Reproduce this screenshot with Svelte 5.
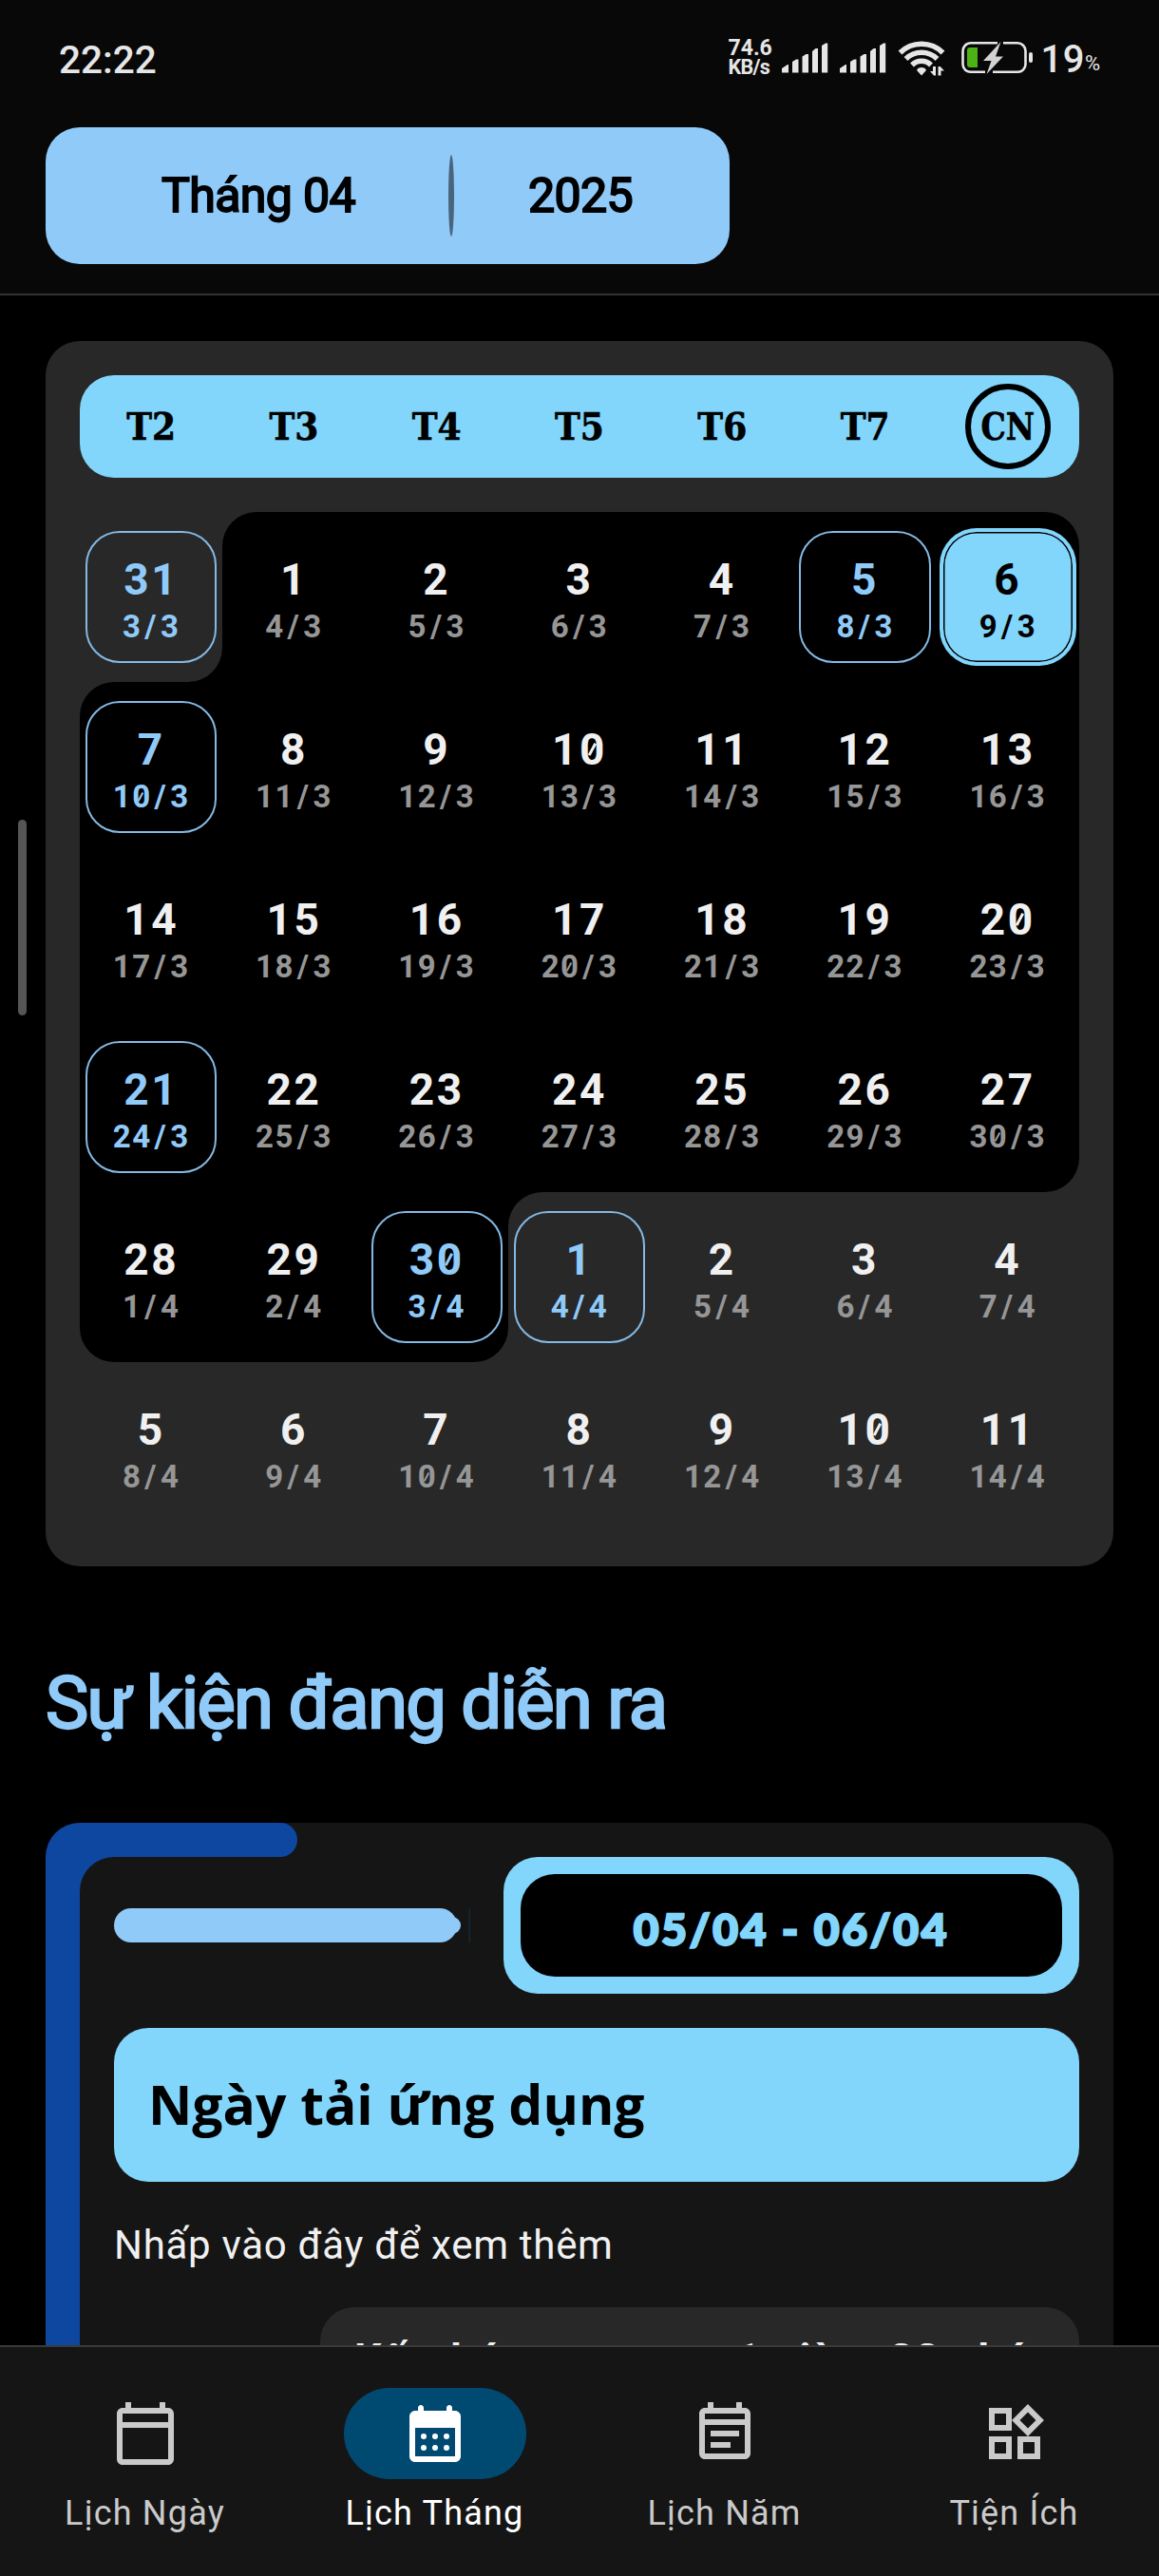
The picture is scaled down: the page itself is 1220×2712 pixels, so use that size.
<script lang="ts">
  type Day = { day: string; lunar: string; event?: boolean; today?: boolean; outside?: boolean; shape?: string };

  const weekdays = ['T2', 'T3', 'T4', 'T5', 'T6', 'T7', 'CN'];

  const eventCells = [0, 5, 7, 21, 30, 31];
  const shapes: Record<number, string> = {
    0: 'notch-br',
    1: 'tl',
    6: 'tr',
    7: 'tl',
    27: 'br',
    28: 'bl',
    30: 'br',
    31: 'notch-tl'
  };

  // Six weeks starting on Monday 31 March 2025 (lunar 3/3).
  const days: Day[] = Array.from({ length: 42 }, (_, i) => {
    const day = i === 0 ? 31 : i <= 30 ? i : i - 30;
    const lunar = i < 28 ? `${i + 3}/3` : `${i - 27}/4`;
    return {
      day: String(day),
      lunar,
      event: eventCells.includes(i),
      today: i === 6,
      outside: i === 0 || i > 30,
      shape: shapes[i] ?? ''
    };
  });

  const tabs = [
    {
      label: 'Lịch Ngày',
      path: 'M20 3h-1V1h-2v2H7V1H5v2H4c-1.1 0-2 .9-2 2v16c0 1.1.9 2 2 2h16c1.1 0 2-.9 2-2V5c0-1.1-.9-2-2-2zm0 18H4V10h16v11zm0-13H4V5h16v3z'
    },
    {
      label: 'Lịch Tháng',
      active: true,
      path: 'M19 4h-1V3c0-.55-.45-1-1-1s-1 .45-1 1v1H8V3c0-.55-.45-1-1-1s-1 .45-1 1v1H5c-1.11 0-1.99.9-1.99 2L3 20c0 1.1.89 2 2 2h14c1.1 0 2-.9 2-2V6c0-1.1-.9-2-2-2zm0 16H5V10h14v10zM8 12a1 1 0 1 0 0 2 1 1 0 0 0 0-2zm4 0a1 1 0 1 0 0 2 1 1 0 0 0 0-2zm4 0a1 1 0 1 0 0 2 1 1 0 0 0 0-2zm-8 4a1 1 0 1 0 0 2 1 1 0 0 0 0-2zm4 0a1 1 0 1 0 0 2 1 1 0 0 0 0-2zm4 0a1 1 0 1 0 0 2 1 1 0 0 0 0-2z'
    },
    {
      label: 'Lịch Năm',
      path: 'M19 3h-1V1h-2v2H8V1H6v2H5c-1.11 0-2 .9-2 2v14c0 1.1.89 2 2 2h14c1.1 0 2-.9 2-2V5c0-1.1-.9-2-2-2zm0 16H5V9h14v10zM5 7V5h14v2H5zm2 4h10v2H7v-2zm0 4h7v2H7v-2z'
    },
    {
      label: 'Tiện Ích',
      path: 'M16.66 4.52l2.83 2.83-2.83 2.83-2.83-2.83 2.83-2.83M9 5v4H5V5h4m10 10v4h-4v-4h4M9 15v4H5v-4h4m7.66-13.31L11 7.34 16.66 13l5.66-5.66-5.66-5.65zM11 3H3v8h8V3zm10 10h-8v8h8v-8zm-10 0H3v8h8v-8z'
    }
  ];
</script>

{#snippet mono(text: string)}{#each text as c}{#if c === '0'}<span class="zero">0</span>{:else if c === '/'}<span class="slash">/</span>{:else}{c}{/if}{/each}{/snippet}

<div class="screen">
  <header>
    <div class="status">
      <span class="clock">22:22</span>
      <span class="speed"><span class="rate">74.6</span><span class="unit">KB/s</span></span>
      <svg class="indicators" viewBox="820 38 270 44" width="270" height="44">
        <g fill="#e6e6e6">
          <path d="M823 75.5V71l6-4h1v8.500zM834 75.500V64l4-2.500h2.500v14zM844.500 75.500V58.500l4-2.500h2.500v19.500zM855 75.500V53l3.500-3h2.500v25.500zM865 75.500V47l4-2.500h2.200v31z" />
          <path d="M884 75.500V71l6-4h1v8.500zM895 75.500V64l4-2.500h2.500v14zM905.500 75.500V58.500l4-2.500h2.500v19.500zM916 75.500V53l3.500-3h2.500v25.500zM926 75.500V47l4-2.500h2.200v31z" />
          <path d="M970 78.500l-5-5.500q1-3 5-3t5 3z" />
          <path d="M985 69v9.500h-2l-4-4.500h3v-5zM987.500 78.500V69h2.200l4.300 4.500h-3.500v5z" />
        </g>
        <g fill="none" stroke="#e6e6e6" stroke-width="5.500">
          <path d="M947.500 54.500A32 32 0 0 1 992.500 54.500" />
          <path d="M953.500 61A23.500 23.500 0 0 1 986.500 61" />
          <path d="M960 67.500A14 14 0 0 1 980 67.500" />
        </g>
        <rect x="1018" y="49" width="11" height="21" rx="3" fill="#4db314" />
        <rect x="1026" y="49" width="3" height="21" fill="#4db314" />
        <path d="M1050 44.300h-28a8.500 8.500 0 0 0-8.500 8.500v14a8 8 0 0 0 8.500 8h15M1056 44.300h15a8.500 8.500 0 0 1 8.500 8.500v14a8 8 0 0 1-8.500 8h-26" fill="none" stroke="#e6e6e6" stroke-width="2.600" />
        <path d="M1053.500 43l-18.500 20h8.500l-5 14 17.500-18.500h-8z" fill="#d2d2d2" />
        <rect x="1083" y="54" width="4" height="11" rx="2" fill="#e6e6e6" />
      </svg>
      <span class="battery">19</span><span class="percent">%</span>
    </div>
    <div class="picker">
      <span class="month">Tháng 04</span>
      <i class="divider"></i>
      <span class="year">2025</span>
    </div>
  </header>

  <main>
    <i class="handle"></i>
    <section class="calendar">
      <div class="weekdays">
        {#each weekdays as name}
          <div class="weekday" class:ring={name === 'CN'}><span>{name}</span></div>
        {/each}
      </div>
      <div class="grid">
        {#each days as d}
          <div class="cell {d.shape}">
            <div class="face" class:outside={d.outside}>
              <div class="box" class:event={d.event} class:today={d.today}>
                <div class="day">{@render mono(d.day)}</div>
                <div class="lunar">{@render mono(d.lunar)}</div>
              </div>
            </div>
          </div>
        {/each}
      </div>
    </section>

    <h2>Sự kiện đang diễn ra</h2>

    <article class="event-card">
      <div class="accent"></div>
      <div class="frame">
        <div class="body">
          <div class="head">
            <svg class="progress" viewBox="0 0 376 36" width="376" height="36">
              <rect width="361" height="36" rx="18" fill="#90caf9" />
              <circle cx="356" cy="18" r="9" fill="#90caf9" />
              <rect x="373.500" width="1.500" height="36" fill="#102a36" />
            </svg>
            <div class="range"><span>05/04 - 06/04</span></div>
          </div>
          <h3>Ngày tải ứng dụng</h3>
          <p>Nhấp vào đây để xem thêm</p>
          <div class="chip"><span>Kết thúc</span> <span>trong</span> <span>1 giờ</span> <span>22 phút</span></div>
        </div>
      </div>
    </article>
  </main>

  <nav>
    {#each tabs as tab}
      <div class="tab" class:active={tab.active}>
        <div class="pill">
          <svg viewBox="0 0 24 24" width="72" height="72"><path d={tab.path} fill-rule={tab.active ? 'nonzero' : 'evenodd'} /></svg>
        </div>
        <span>{tab.label}</span>
      </div>
    {/each}
  </nav>
</div>

<style>
  :global(body) {
    background: #000;
  }
  .screen {
    display: flex;
    flex-direction: column;
    width: 1220px;
    height: 2712px;
    overflow: hidden;
    background: #000;
    font-family: Roboto, 'Liberation Sans', sans-serif;
    color: #f0f0f0;
  }

  header {
    box-sizing: border-box;
    height: 311px;
    flex: none;
    background: #080808;
    border-bottom: 2px solid #333;
  }
  .status {
    box-sizing: border-box;
    display: flex;
    align-items: center;
    height: 134px;
    padding: 0 62px 12px 62px;
    color: #e6e6e6;
    white-space: nowrap;
  }
  .clock {
    flex: 1;
    font-size: 40.500px;
    font-weight: 500;
    line-height: 40px;
    padding-top: 3px;
  }
  .speed {
    display: flex;
    flex-direction: column;
    width: 53px;
    line-height: 20px;
    font-weight: 700;
  }
  .rate {
    font-size: 23px;
  }
  .unit {
    font-size: 21.500px;
    letter-spacing: -0.700px;
  }
  .indicators {
    flex: none;
    margin-right: 6px;
  }
  .battery {
    font-size: 40px;
    line-height: 40px;
    font-weight: 500;
    padding-top: 3px;
    letter-spacing: 0.500px;
  }
  .percent {
    font-size: 22px;
    line-height: 24px;
    width: 16px;
    padding-top: 11px;
    letter-spacing: -0.500px;
  }
  .picker {
    box-sizing: border-box;
    display: flex;
    align-items: center;
    width: 720px;
    height: 144px;
    margin-left: 48px;
    padding: 0 24px;
    border-radius: 36px;
    background: #90caf9;
    color: #000;
    font-size: 50px;
    font-weight: 400;
    line-height: 60px;
    letter-spacing: -0.600px;
    text-align: center;
    -webkit-text-stroke: 1.900px #000;
  }
  .month {
    width: 400px;
  }
  .divider {
    width: 6px;
    height: 86px;
    border-radius: 50%;
    background: #48657d;
  }
  .year {
    flex: 1;
  }

  main {
    position: relative;
    flex: 1;
    min-height: 0;
    overflow: hidden;
    padding: 48px 48px 0;
  }
  .handle {
    position: absolute;
    left: 19px;
    top: 552px;
    width: 9px;
    height: 206px;
    border-radius: 5px;
    background: #555;
  }

  .calendar {
    padding: 36px;
    border-radius: 36px;
    background: #282828;
  }
  .weekdays {
    display: grid;
    grid-template-columns: repeat(7, 1fr);
    height: 108px;
    margin-bottom: 36px;
    border-radius: 36px;
    background: #82d5fb;
    color: #000;
    font: 700 40px/1 'DejaVu Serif Condensed', 'DejaVu Serif', serif;
    -webkit-text-stroke: 0.600px #000;
  }
  .weekday {
    display: grid;
    place-items: center;
  }
  .ring {
    box-sizing: border-box;
    width: 90px;
    height: 90px;
    border: 6px solid #000;
    border-radius: 50%;
    place-self: center;
  }
  .ring span {
    transform: scaleX(0.920);
  }

  .grid {
    display: grid;
    grid-template-columns: repeat(7, 1fr);
    grid-auto-rows: 179px;
  }
  .face {
    box-sizing: border-box;
    height: 179px;
    padding: 20px 6px;
    background: #000;
  }
  .face.outside {
    background: #282828;
  }
  .tl .face,
  .notch-tl .face {
    border-top-left-radius: 36px;
  }
  .tr .face {
    border-top-right-radius: 36px;
  }
  .bl .face {
    border-bottom-left-radius: 36px;
  }
  .br .face,
  .notch-br .face {
    border-bottom-right-radius: 36px;
  }
  .notch-tl,
  .notch-br {
    background: #000;
  }
  .box {
    box-sizing: border-box;
    height: 139px;
    border: 2px solid transparent;
    border-radius: 36px;
    padding-top: 21px;
    text-align: center;
    font-weight: 700;
    white-space: nowrap;
  }
  .day {
    font-size: 46px;
    line-height: 56px;
    letter-spacing: 2.600px;
  }
  .lunar {
    font-size: 33px;
    line-height: 43px;
    letter-spacing: 1.400px;
    color: #969696;
    font-weight: 700;
  }
  .event {
    border-color: #84b9e4;
  }
  .event,
  .event .lunar {
    color: #90caf9;
  }
  .today {
    border-color: #82d5fb;
    border-width: 1px;
    padding-top: 22px;
    background: #82d5fb;
    box-shadow:
      0 0 0 3px #82d5fb,
      inset 0 0 0 1.500px #000;
  }
  .today,
  .today .lunar {
    color: #000;
  }
  .slash {
    padding: 0 3px;
  }
  .zero {
    position: relative;
  }
  /* Diagonal stroke inside the zero's counter */
  .zero::after {
    content: '';
    position: absolute;
    left: calc(0.287em - 0.035em);
    top: 0.440em;
    width: 0.070em;
    height: 0.300em;
    background: currentColor;
    transform: rotate(28deg);
  }

  h2 {
    margin: 94px 0 76px;
    font-size: 76px;
    line-height: 100px;
    font-weight: 400;
    letter-spacing: -1.700px;
    color: #90caf9;
    white-space: nowrap;
    -webkit-text-stroke: 2.400px #90caf9;
  }

  .event-card {
    border-radius: 36px 36px 0 0;
    background: #151515;
    overflow: hidden;
  }
  .accent {
    width: 265px;
    height: 36px;
    border-radius: 0 18px 18px 0;
    background: #0d479f;
  }
  .frame {
    background: linear-gradient(to right, #0d479f 72px, #151515 72px);
  }
  .body {
    display: flex;
    flex-direction: column;
    gap: 36px;
    margin-left: 36px;
    padding: 0 36px;
    height: 620px;
    border-top-left-radius: 36px;
    background: #151515;
  }
  .head {
    display: flex;
    align-items: center;
    justify-content: space-between;
    height: 144px;
    flex: none;
  }
  .range {
    box-sizing: border-box;
    width: 606px;
    height: 144px;
    padding: 18px;
    border-radius: 36px;
    background: #82d5fb;
    color: #82d5fb;
    font: 900 46px/60px Lato, sans-serif;
  }
  .range span {
    display: block;
    height: 108px;
    line-height: 115px;
    border-radius: 36px;
    background: #000;
    text-align: center;
    letter-spacing: 2.800px;
    -webkit-text-stroke: 2.400px #82d5fb;
    paint-order: stroke fill;
    stroke-linejoin: round;
  }
  h3 {
    margin: 0;
    flex: none;
    box-sizing: border-box;
    height: 162px;
    padding: 40px 36px;
    border-radius: 36px;
    background: #82d5fb;
    color: #000;
    font: 700 57px/80px 'Open Sans', 'Noto Sans', sans-serif;
    white-space: nowrap;
  }
  p {
    margin: 0;
    padding-top: 1px;
    margin-bottom: -1px;
    font-size: 42px;
    line-height: 60px;
    letter-spacing: 0.700px;
    white-space: nowrap;
  }
  .chip {
    box-sizing: border-box;
    display: flex;
    justify-content: space-between;
    align-self: flex-end;
    width: 799px;
    height: 108px;
    padding: 25px 36px;
    border-radius: 36px;
    background: #282828;
    font-size: 45px;
    line-height: 60px;
    font-weight: 700;
    letter-spacing: 1.500px;
    white-space: nowrap;
  }

  nav {
    box-sizing: border-box;
    flex: none;
    display: grid;
    grid-template-columns: repeat(4, 1fr);
    height: 243px;
    padding-top: 43px;
    background: #151515;
    border-top: 2px solid #3a3a3a;
    color: #cacaca;
  }
  .tab {
    display: flex;
    flex-direction: column;
    align-items: center;
    font-size: 36px;
    line-height: 44px;
    letter-spacing: 1.200px;
  }
  .pill {
    display: grid;
    place-items: center;
    width: 192px;
    height: 96px;
    margin-bottom: 14px;
    border-radius: 48px;
  }
  .pill svg {
    fill: currentColor;
  }
  .active {
    color: #fff;
  }
  .active .pill {
    background: #004a72;
  }
</style>
